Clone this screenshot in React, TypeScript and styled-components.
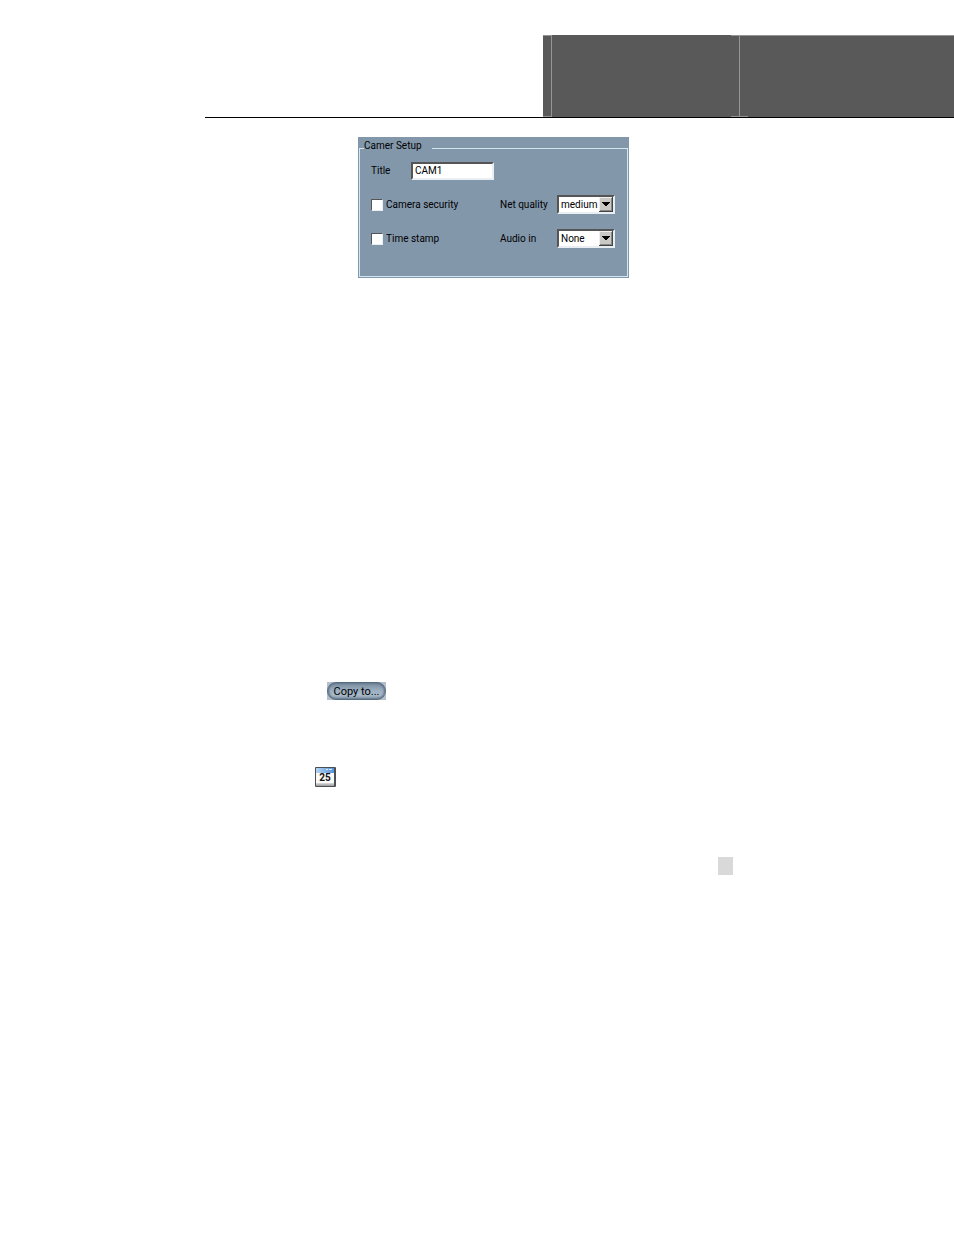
import React from "react";
import styled, { createGlobalStyle } from "styled-components";

const GlobalStyle = createGlobalStyle`
  *, *::before, *::after { box-sizing: border-box; }
  body {
    margin: 0;
    background: #fff;
    color: #000;
    font-family: Roboto, "Liberation Sans", Arial, sans-serif;
    font-size: 10px;
    line-height: 14px;
  }
`;

const Page = styled.div`
  padding-top: 35px;
`;

const Header = styled.header`
  display: flex;
  justify-content: flex-end;
  margin-left: 205px;
  border-bottom: 1px solid #000;
`;

const Banner = styled.div`
  display: grid;
  grid-template-columns: 8px 180px 8px 9px 1fr;
  width: 411px;
  height: 82px;
  background: #595959;
`;

const BannerCell = styled.div<{ $top?: boolean; $bottom?: boolean; $left?: boolean }>`
  border: 0 solid #959595;
  border-top-width: ${(p) => (p.$top ? 1 : 0)}px;
  border-bottom-width: ${(p) => (p.$bottom ? 1 : 0)}px;
  border-left-width: ${(p) => (p.$left ? 1 : 0)}px;
`;

const Content = styled.main`
  display: flex;
  flex-direction: column;
  align-items: flex-start;
`;

const Panel = styled.form`
  width: 271px;
  margin: 19px 0 0 358px;
  padding: 2px 1px 1px;
  background: #8397ab;
`;

const Group = styled.fieldset`
  min-width: 0;
  margin: 0;
  padding: 4px 12px 13px 11px;
  border: 1px solid #d3e5f0;
`;

const Legend = styled.legend`
  width: 68px;
  height: 18px;
  margin-left: -7px;
  padding: 0;
`;

const Row = styled.div`
  display: flex;
  align-items: center;
  height: 19px;
  margin-bottom: 15px;
`;

const Label = styled.label<{ $width: number }>`
  width: ${(p) => p.$width}px;
  white-space: nowrap;
`;

const TitleInput = styled.input`
  width: 83px;
  height: 18px;
  padding: 0 2px;
  border: 2px solid;
  border-color: #555 #e8eef2 #e8eef2 #555;
  border-radius: 0;
  outline: 0;
  background: #fff;
  color: #000;
  font: inherit;
`;

const Check = styled.input`
  appearance: none;
  width: 12px;
  height: 12px;
  margin: 0 3px 0 0;
  border: 1px solid;
  border-color: #555 #e8eef2 #e8eef2 #555;
  background: #fff;
  &:checked { background: #333; }
`;

const SelectBox = styled.div`
  position: relative;
  width: 58px;
  height: 19px;
`;

const Select = styled.select`
  appearance: none;
  width: 100%;
  height: 100%;
  padding: 0 14px 0 2px;
  border: 2px solid;
  border-color: #555 #e8eef2 #e8eef2 #555;
  border-radius: 0;
  outline: 0;
  background: #fff;
  color: #000;
  font: inherit;
`;

const Arrow = styled.svg`
  position: absolute;
  top: 2px;
  right: 2px;
  pointer-events: none;
`;

const CopyButton = styled.button`
  width: 59px;
  height: 18px;
  margin: 404px 0 0 327px;
  padding: 0;
  border: 0;
  background: #b4bfc9;
  color: #000;
  font: inherit;
  font-size: 11px;
`;

const CopyFace = styled.span`
  display: block;
  height: 18px;
  border: 1px solid #586c80;
  border-radius: 9px;
  background: linear-gradient(#75889b, #98abbd 40%, #a9bac9 75%, #8294a6);
  box-shadow: inset 1px 0 2px #5d7389, inset -1px 0 2px #5d7389;
  line-height: 17px;
`;

const CalendarButton = styled.button`
  width: 22px;
  height: 22px;
  margin: 66px 0 0 314px;
  padding: 0;
  border: 0;
  background: none;
`;

const Marker = styled.div`
  width: 15px;
  height: 18px;
  margin: 69px 0 0 718px;
  background: #d9d9d9;
`;

function Dropdown({ id, options }: { id: string; options: string[] }) {
  return (
    <SelectBox>
      <Select id={id} defaultValue={options[0]}>
        {options.map((o) => (
          <option key={o}>{o}</option>
        ))}
      </Select>
      <Arrow width="14" height="15" viewBox="0 0 14 15" shapeRendering="crispEdges" aria-hidden="true">
        <path fill="#444" d="M0 0h14v15H0z" />
        <path fill="#eee" d="M0 0h13v14H0z" />
        <path fill="#888" d="M1 1h12v13H1z" />
        <path fill="#c9c8c4" d="M1 1h11v12H1z" />
        <path fill="#000" d="M3 5h8v1H3zM4 6h6v1H4zM5 7h4v1H5zM6 8h2v1H6z" />
      </Arrow>
    </SelectBox>
  );
}

function CalendarIcon() {
  return (
    <svg width="22" height="22" viewBox="0 0 22 22" aria-hidden="true">
      <defs>
        <linearGradient id="calTop" x1="0" x2="1" y1="0" y2="0">
          <stop offset="0" stopColor="#b5d5f5" />
          <stop offset="1" stopColor="#5592d6" />
        </linearGradient>
        <linearGradient id="calBase" x1="0" x2="0" y1="0" y2="1">
          <stop offset="0" stopColor="#ddd" />
          <stop offset="1" stopColor="#999" />
        </linearGradient>
      </defs>
      <rect x="1" y="1" width="21" height="20" rx="1" fill="#4a5056" />
      <rect x="2" y="2" width="18" height="17" fill="#fafafa" />
      <rect x="2" y="2" width="18" height="5" fill="url(#calTop)" />
      <path d="M12 3.500h2M15 3.500h3" stroke="#dcecff" />
      <rect x="2" y="17" width="18" height="3" fill="url(#calBase)" />
      <text
        x="11"
        y="15"
        textAnchor="middle"
        fontFamily="Roboto, Liberation Sans, sans-serif"
        fontWeight="700"
        fontSize="10"
        fill="#111"
      >
        25
      </text>
    </svg>
  );
}

export default function App() {
  return (
    <Page>
      <GlobalStyle />
      <Header>
        <Banner>
          <BannerCell $top $bottom />
          <BannerCell $left />
          <BannerCell $top $bottom />
          <BannerCell $top $bottom $left />
          <BannerCell $top />
        </Banner>
      </Header>
      <Content>
        <Panel>
          <Group>
            <Legend>Camer Setup</Legend>
            <Row>
              <Label htmlFor="title" $width={40}>Title</Label>
              <TitleInput id="title" defaultValue="CAM1" />
            </Row>
            <Row>
              <Check id="security" type="checkbox" />
              <Label htmlFor="security" $width={114}>Camera security</Label>
              <Label htmlFor="quality" $width={57}>Net quality</Label>
              <Dropdown id="quality" options={["medium", "low", "high"]} />
            </Row>
            <Row>
              <Check id="stamp" type="checkbox" />
              <Label htmlFor="stamp" $width={114}>Time stamp</Label>
              <Label htmlFor="audio" $width={57}>Audio in</Label>
              <Dropdown id="audio" options={["None", "1"]} />
            </Row>
          </Group>
        </Panel>
        <CopyButton type="button">
          <CopyFace>Copy to...</CopyFace>
        </CopyButton>
        <CalendarButton type="button" aria-label="Calendar">
          <CalendarIcon />
        </CalendarButton>
        <Marker />
      </Content>
    </Page>
  );
}
